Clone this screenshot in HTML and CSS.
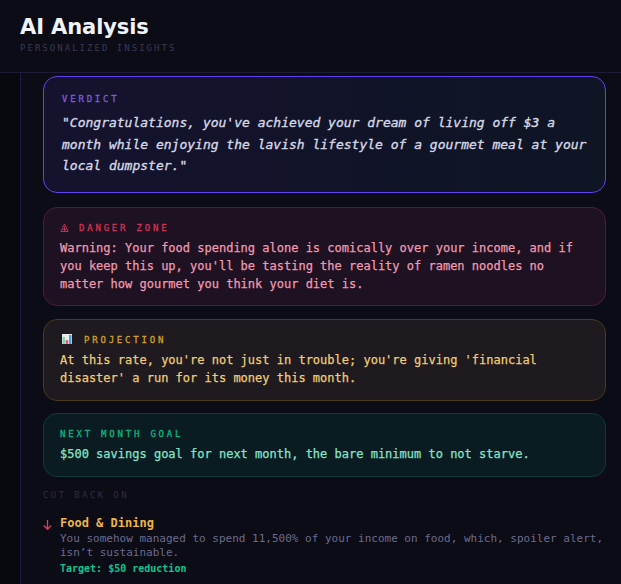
FILE: index.html

```html
<!DOCTYPE html>
<html lang="en">
<head>
  <meta charset="UTF-8" />
  <meta name="viewport" content="width=device-width, initial-scale=1.0"/>
  <title>AI Analysis</title>
  <link rel="stylesheet" href="styles.css">
</head>
<body>
  <div class="header">
    <div class="title">AI Analysis</div>
    <div class="subtitle">PERSONALIZED INSIGHTS</div>
  </div>
  <div class="layout">
    <div class="rail"></div>
    <div class="content">
      <div class="card verdict">
        <div class="label">VERDICT</div>
        <p class="quote">"Congratulations, you've achieved your dream of living off $3 a month while enjoying the lavish lifestyle of a gourmet meal at your local dumpster."</p>
      </div>

      <div class="card danger">
        <div class="label">
          <svg class="warn" width="9" height="9" viewBox="0 0 9 9" fill="none" stroke="#c0304f">
            <path d="M4.5 1L0.8 8.5H8.2ZM4.5 3.5V8.5M2.5 6.5H6.5"/>
          </svg>DANGER ZONE
        </div>
        <p>Warning: Your food spending alone is comically over your income, and if you keep this up, you'll be tasting the reality of ramen noodles no matter how gourmet you think your diet is.</p>
      </div>

      <div class="card projection">
        <div class="label">
          <svg class="chart" width="10" height="10" viewBox="0 0 10 10">
            <rect width="10" height="10" fill="#e8edf2"/>
            <rect x="0.5" y="3" width="2.5" height="7" fill="#7fd6a0"/>
            <rect x="3.7" y="6" width="2.5" height="4" fill="#e8548c"/>
            <rect x="7" y="1" width="2.5" height="9" fill="#4f9fe0"/>
          </svg>PROJECTION
        </div>
        <p>At this rate, you're not just in trouble; you're giving 'financial disaster' a run for its money this month.</p>
      </div>

      <div class="card goal">
        <div class="label">NEXT MONTH GOAL</div>
        <p>$500 savings goal for next month, the bare minimum to not starve.</p>
      </div>

      <div class="section">CUT BACK ON</div>

      <div class="item">
        <svg class="arrow" width="9" height="10" viewBox="0 0 9 10" fill="none" stroke="#e0405f" stroke-width="1.3">
          <path d="M4.5 0V9M0.8 5.5l3.7 3.7 3.7-3.7"/>
        </svg>
        <div class="item-body">
          <div class="item-name">Food &amp; Dining</div>
          <div class="item-desc">You somehow managed to spend 11,500% of your income on food, which, spoiler alert, isn’t sustainable.</div>
          <div class="item-target">Target: $50 reduction</div>
        </div>
      </div>
    </div>
  </div>
</body>
</html>
```

FILE: styles.css

```css
html, body {
  height: 100%;
}
body {
  margin: 0;
  background-color: #0c0c17;
  font-family: 'DejaVu Sans Mono', 'Liberation Mono', monospace;
  display: flex;
  flex-direction: column;
  overflow: hidden;
}
.header {
  height: 72px;
  padding-left: 20px;
  border-bottom: 1px solid #1e1b38;
}
.title {
  padding-top: 14px;
  font-family: 'DejaVu Sans', sans-serif;
  font-size: 21px;
  line-height: 26px;
  font-weight: 700;
  color: #f1f3fb;
  letter-spacing: -0.1px;
}
.subtitle {
  margin-top: 1px;
  font-size: 9px;
  line-height: 14px;
  letter-spacing: 2.03px;
  color: #3a3a55;
}
.layout {
  flex: 1;
  display: flex;
  min-height: 0;
}
.rail {
  width: 20px;
  background-color: #08080f;
  border-right: 1px solid #1e1b44;
}
.content {
  flex: 1;
  padding: 3px 15px 0 22px;
  min-width: 0;
}
.card {
  box-sizing: border-box;
  border: 1px solid;
  border-radius: 14px;
  padding: 14px 16px;
  margin-bottom: 13px;
}
.card p {
  margin: 0;
  font-size: 12px;
  line-height: 18px;
  -webkit-text-stroke: 0.25px;
}
.label {
  font-size: 9px;
  line-height: 12px;
  letter-spacing: 2.8px;
  margin-bottom: 5px;
  -webkit-text-stroke: 0.3px;
}
.verdict {
  height: 117px;
  padding: 0 18px;
  margin-bottom: 14px;
  border-color: #6042f0;
  background: linear-gradient(90deg, #15122e, #0e1524);
}
.verdict .label {
  padding-top: 16px;
  margin-bottom: 7px;
  color: #7a5fd8;
}
.card .quote {
  font-size: 13px;
  line-height: 21.5px;
  font-style: italic;
  color: #d5d8e6;
  -webkit-text-stroke: 0.35px;
}
.danger {
  height: 99px;
  border-color: #4c1d34;
  background-color: #1e1122;
}
.danger .label {
  color: #cf3355;
}
.danger p {
  color: #ef9ab0;
}
.warn {
  margin-right: 10px;
  vertical-align: -1px;
}
.projection {
  height: 82px;
  margin-bottom: 12px;
  border-color: #4a3a1e;
  background-color: #1e1a20;
}
.projection .label {
  color: #d4a02a;
}
.projection p {
  color: #efcd74;
}
.chart {
  margin: 0 12px 0 2px;
  vertical-align: -1px;
}
.goal {
  height: 64px;
  margin-bottom: 0;
  border-color: #103a35;
  background-color: #0b1b22;
}
.goal .label {
  color: #10b582;
}
.goal p {
  color: #84e4c8;
}
.section {
  margin-top: 12px;
  font-size: 9px;
  line-height: 12px;
  letter-spacing: 2.4px;
  color: #2c2c40;
}
.item {
  display: flex;
  margin-top: 14px;
}
.arrow {
  flex: none;
  margin: 5px 8px 0 0;
}
.item-body {
  min-width: 0;
}
.item-name {
  font-size: 12px;
  line-height: 17px;
  font-weight: 700;
  color: #eeb54a;
}
.item-desc {
  font-size: 11px;
  line-height: 14px;
  color: #6b6b8c;
}
.item-target {
  margin-top: 1px;
  font-size: 10px;
  line-height: 15px;
  font-weight: 700;
  color: #0fc48c;
}
```
